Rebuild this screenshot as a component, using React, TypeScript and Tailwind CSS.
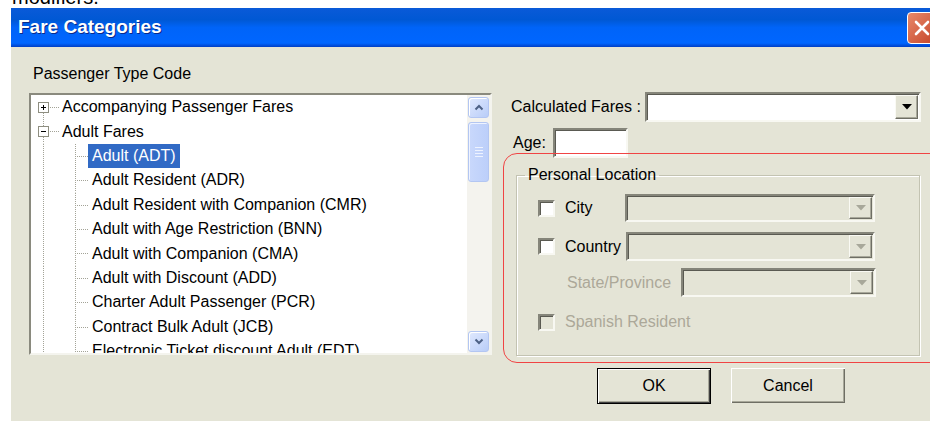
import React from 'react';

type TreeItem = {
  label: string;
  level: 0 | 1;
  sign?: '+' | '-';
  first?: boolean;
  selected?: boolean;
};

const items: TreeItem[] = [
  { label: 'Accompanying Passenger Fares', level: 0, sign: '+', first: true },
  { label: 'Adult Fares', level: 0, sign: '-' },
  { label: 'Adult (ADT)', level: 1, selected: true },
  { label: 'Adult Resident (ADR)', level: 1 },
  { label: 'Adult Resident with Companion (CMR)', level: 1 },
  { label: 'Adult with Age Restriction (BNN)', level: 1 },
  { label: 'Adult with Companion (CMA)', level: 1 },
  { label: 'Adult with Discount (ADD)', level: 1 },
  { label: 'Charter Adult Passenger (PCR)', level: 1 },
  { label: 'Contract Bulk Adult (JCB)', level: 1 },
  { label: 'Electronic Ticket discount Adult (EDT)', level: 1 },
];

const DOT = '#a3a397';

function RootGutter({ sign, first }: { sign?: '+' | '-'; first?: boolean }) {
  return (
    <svg width="29" height="24.4" className="shrink-0">
      <line x1="12.5" y1={first ? 12 : 0} x2="12.5" y2="24.4" stroke={DOT} strokeDasharray="1 1" />
      <line x1="17" y1="12.5" x2="28" y2="12.5" stroke={DOT} strokeDasharray="1 1" />
      <rect x="7.5" y="7.5" width="10" height="10" fill="#fff" stroke="#8e8e80" />
      <line x1="10" y1="12.5" x2="15" y2="12.5" stroke="#000" />
      {sign === '+' && <line x1="12.5" y1="10" x2="12.5" y2="15" stroke="#000" />}
    </svg>
  );
}

function ChildGutter() {
  return (
    <svg width="57" height="24.4" className="shrink-0">
      <line x1="12.5" y1="0" x2="12.5" y2="24.4" stroke={DOT} strokeDasharray="1 1" />
      <line x1="44.5" y1="0" x2="44.5" y2="24.4" stroke={DOT} strokeDasharray="1 1" />
      <line x1="46" y1="12.5" x2="57" y2="12.5" stroke={DOT} strokeDasharray="1 1" />
    </svg>
  );
}

function ScrollArrow({ down }: { down?: boolean }) {
  return (
    <div className="flex h-[21px] items-center justify-center rounded-[3px] border border-[#b3c6f2] bg-[linear-gradient(135deg,#e0e9fe,#b9cdf8)] shadow-[inset_1px_1px_0_#fff]">
      <svg width="10" height="7">
        <path
          d={down ? 'M1.5 1.5 L5 5 L8.5 1.5' : 'M1.5 5.5 L5 2 L8.5 5.5'}
          stroke="#4d6185"
          strokeWidth="2"
          fill="none"
        />
      </svg>
    </div>
  );
}

function Scrollbar() {
  return (
    <div className="flex w-[23px] shrink-0 flex-col bg-[#f4f3ee] p-[1px] pt-[2px]">
      <ScrollArrow />
      <div className="mt-[4px] flex h-[60px] flex-col items-center justify-center gap-[2px] rounded-[3px] border border-[#b3c6f2] bg-[linear-gradient(90deg,#c9d8fc,#bccffa)] shadow-[inset_1px_1px_0_#eef3ff]">
        <div className="h-px w-[8px] bg-[#eef3ff]" />
        <div className="h-px w-[8px] bg-[#eef3ff]" />
        <div className="h-px w-[8px] bg-[#eef3ff]" />
        <div className="h-px w-[8px] bg-[#eef3ff]" />
      </div>
      <div className="flex-1" />
      <ScrollArrow down />
    </div>
  );
}

function Tree() {
  return (
    <div className="flex h-[262px] border-2 border-t-[#8a8a7e] border-l-[#8a8a7e] border-r-[#f4f4ee] border-b-[#f4f4ee] bg-white">
      <div className="flex-1 overflow-hidden">
        {items.map((it) => (
          <div key={it.label} className="flex h-[24.4px] items-center whitespace-nowrap">
            {it.level === 0 ? <RootGutter sign={it.sign} first={it.first} /> : <ChildGutter />}
            <span
              className={
                it.level === 0
                  ? 'pl-[2px] leading-[24px]'
                  : it.selected
                    ? 'bg-[#316ac5] px-[4px] leading-[24px] text-white'
                    : 'px-[4px] leading-[24px]'
              }
            >
              {it.label}
            </span>
          </div>
        ))}
      </div>
      <Scrollbar />
    </div>
  );
}

function DropButton({ disabled }: { disabled?: boolean }) {
  return (
    <div className="flex h-full w-[23px] items-center justify-center border border-t-[#fafaf4] border-l-[#fafaf4] border-r-[#6e6e64] border-b-[#6e6e64] bg-[#e4e4d6] shadow-[inset_-1px_-1px_0_#a8a89a]">
      <svg width="10" height="6">
        <path d="M0 0 H10 L5 5.5 Z" fill={disabled ? '#a8a89a' : '#000'} />
      </svg>
    </div>
  );
}

function Combo({ width, height, disabled }: { width: string; height: string; disabled?: boolean }) {
  return (
    <div
      className={`${width} ${height} flex justify-end border-2 border-t-[#85857a] border-l-[#85857a] border-r-[#f8f8f2] border-b-[#f8f8f2] p-[1px] shadow-[inset_1px_1px_0_#5a5a52] ${disabled ? 'bg-[#e4e4d6]' : 'bg-white'}`}
    >
      <DropButton disabled={disabled} />
    </div>
  );
}

function Checkbox({ disabled }: { disabled?: boolean }) {
  return (
    <div
      className={`h-[17px] w-[17px] shrink-0 border-2 border-t-[#85857a] border-l-[#85857a] border-r-[#f8f8f2] border-b-[#f8f8f2] shadow-[inset_1px_1px_0_#5a5a52] ${disabled ? 'bg-[#e4e4d6]' : 'bg-white'}`}
    />
  );
}

export default function App() {
  return (
    <div className="flex h-[421px] w-[930px] flex-col overflow-hidden bg-white font-['Liberation_Sans',Arial,sans-serif] text-[16px] text-black">
      {/* tail of the paragraph above the dialog */}
      <div className="h-[8px] shrink-0 overflow-hidden pl-[12px]">
        <div className="-mt-[13px] text-[20px] leading-[20px]">modifiers.</div>
      </div>

      <div className="ml-[11px] flex w-[929px] flex-1 flex-col">
        {/* title bar */}
        <div className="flex h-[39px] shrink-0 items-center justify-between bg-[linear-gradient(180deg,#0a5ad8_0%,#0058d4_30%,#0064f8_50%,#0066ff_90%,#003ec4_100%)] pl-[7px] pr-[3px]">
          <span className="text-[19px] font-bold text-white [text-shadow:1px_1px_0_#0b2a8a]">
            Fare Categories
          </span>
          <div className="flex h-[32px] w-[30px] items-center justify-center rounded-[4px] border-[1.5px] border-white bg-[linear-gradient(135deg,#e8896a,#c5452a)]">
            <svg width="16" height="16">
              <path d="M2 2 L14 14 M14 2 L2 14" stroke="#fff" strokeWidth="2.6" strokeLinecap="round" />
            </svg>
          </div>
        </div>

        {/* dialog body */}
        <div className="flex flex-1 bg-[#e4e4d6] pl-[18px]">
          <div className="w-[463px] shrink-0">
            <div className="mt-[17px] h-[20px] pl-[4px] leading-[20px]">Passenger Type Code</div>
            <div className="mt-[9px]">
              <Tree />
            </div>
          </div>

          <div className="relative ml-[11px] flex-1 pt-[45px]">
            <div className="flex h-[30px] items-center">
              <div className="w-[142px] pl-[8px]">Calculated Fares :</div>
              <Combo width="w-[276px]" height="h-[30px]" />
            </div>
            <div className="mt-[6px] flex h-[30px] items-center">
              <div className="w-[50px] pl-[10px]">Age:</div>
              <div className="h-[30px] w-[75px] border-2 border-t-[#85857a] border-l-[#85857a] border-r-[#f8f8f2] border-b-[#f8f8f2] bg-white shadow-[inset_1px_1px_0_#5a5a52]" />
            </div>

            <fieldset className="ml-[13px] mt-[7px] h-[191px] w-[404px] border border-[#c3c3b2] pl-[21px] shadow-[1px_1px_0_#fff,inset_1px_1px_0_#fff]">
              <legend className="-ml-[13px] h-[20px] px-[3px] leading-[20px]">Personal Location</legend>

              <div className="mt-[9px] flex h-[28px] items-center">
                <Checkbox />
                <div className="w-[70px] pl-[10px]">City</div>
                <Combo width="w-[250px]" height="h-[28px]" disabled />
              </div>
              <div className="mt-[10px] flex h-[29px] items-center">
                <Checkbox />
                <div className="w-[71px] pl-[10px]">Country</div>
                <Combo width="w-[249px]" height="h-[29px]" disabled />
              </div>
              <div className="mt-[7px] flex h-[29px] items-center">
                <div className="w-[143px] pl-[29px] text-[#aca899]">State/Province</div>
                <Combo width="w-[195px]" height="h-[29px]" disabled />
              </div>
              <div className="mt-[15px] flex h-[20px] items-center">
                <Checkbox disabled />
                <div className="pl-[10px] text-[#aca899]">Spanish Resident</div>
              </div>
            </fieldset>

            <div className="mt-[12px] flex gap-[20px] pl-[94px]">
              <button className="flex h-[36px] w-[114px] items-center justify-center border border-black bg-[#e4e4d6] shadow-[inset_1px_1px_0_#fff,inset_-1px_-1px_0_#404040,inset_-2px_-2px_0_#a8a89a]">
                OK
              </button>
              <button className="flex h-[35px] w-[114px] items-center justify-center bg-[#e4e4d6] shadow-[inset_1px_1px_0_#fff,inset_-1px_-1px_0_#6e6e64,inset_-2px_-2px_0_#a8a89a]">
                Cancel
              </button>
            </div>

            {/* red highlight drawn around the location group */}
            <div className="pointer-events-none absolute left-0 top-[106px] h-[210px] w-[445px] rounded-[14px] border-[1.5px] border-[#f04444]" />
          </div>
        </div>
      </div>
    </div>
  );
}
